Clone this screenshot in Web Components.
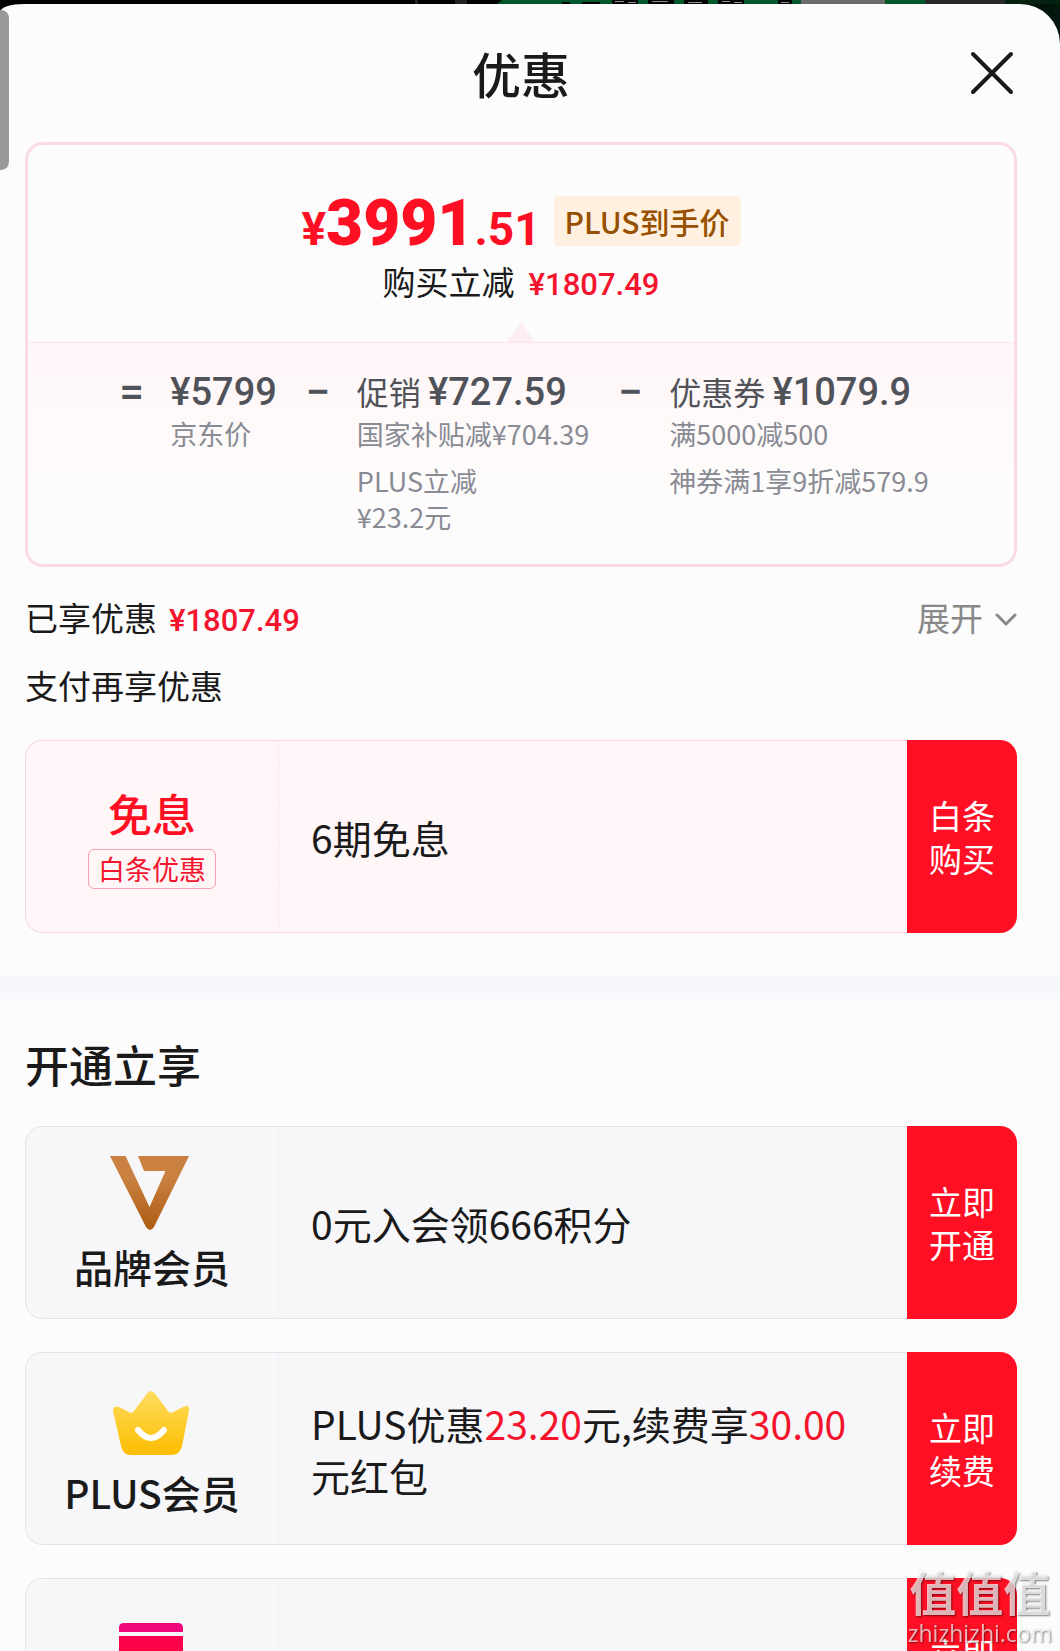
<!DOCTYPE html>
<html lang="zh-CN">
<head>
<meta charset="utf-8">
<meta name="viewport" content="width=device-width, initial-scale=1">
<title>优惠</title>
<style>
  html, body {
    height: 100%;
    margin: 0;
  }
  body {
    overflow: hidden;
    background: #000;
    color: #1a1a1a;
    font-family: "Noto Sans CJK SC", sans-serif;
    --red: #ff0f23;
    --num: Roboto, "Noto Sans CJK SC", sans-serif;
  }
  em {
    font-style: normal;
    color: #f5142d;
  }
</style>
</head>
<body>
<discount-sheet>
  <span slot="title">优惠</span>

  <price-card symbol="¥" whole="3991" cents=".51" tag="PLUS到手价" label="购买立减" saved="¥1807.49">
    <price-term sign="=" amount="¥5799">
      <div>京东价</div>
    </price-term>
    <price-term sign="−" label="促销" amount="¥727.59">
      <div>国家补贴减¥704.39</div>
      <div>PLUS立减<br>¥23.2元</div>
    </price-term>
    <price-term sign="−" label="优惠券" amount="¥1079.9">
      <div>满5000减500</div>
      <div>神券满1享9折减579.9</div>
    </price-term>
  </price-card>

  <saved-summary label="已享优惠" amount="¥1807.49" more="展开" next="支付再享优惠"></saved-summary>

  <offer-row tone="pink">
    <offer-badge slot="brand" heading="免息" note="白条优惠"></offer-badge>
    6期免息
    <span slot="action">白条<br>购买</span>
  </offer-row>

  <section-break heading="开通立享"></section-break>

  <offer-row>
    <member-brand slot="brand" icon="brand">品牌会员</member-brand>
    0元入会领666积分
    <span slot="action">立即<br>开通</span>
  </offer-row>
  <offer-row>
    <member-brand slot="brand" icon="plus">PLUS会员</member-brand>
    PLUS优惠<em>23.20</em>元,续费享<em>30.00</em>元红包
    <span slot="action">立即<br>续费</span>
  </offer-row>
  <offer-row>
    <member-brand slot="brand" icon="card"></member-brand>
    <span slot="action">立即<br>开通</span>
  </offer-row>
</discount-sheet>
<site-mark name="值值值" site="zhizhizhi.com"></site-mark>

<script>
class DiscountSheet extends HTMLElement {
  constructor() {
    super();
    this.attachShadow({mode: 'open'});
  }

  connectedCallback() {
    this.shadowRoot.innerHTML = `
      <style>
        :host {
          display: flex;
          flex-direction: column;
          height: 100%;
          position: relative;
          background: linear-gradient(90deg, #000 90%, #03180d);
        }
        .behind {
          display: block;
          flex: none;
          width: 100%;
          height: 4px;
        }
        .sheet {
          flex: 1;
          min-height: 0;
          overflow: hidden;
          background: #fcfcfc;
          border-radius: 24px 40px 0 0 / 8px 40px 0 0;
        }
        header {
          display: grid;
          grid-template-columns: 48px 1fr 48px;
          align-items: center;
          height: 138px;
          padding: 0 43px 0 25px;
        }
        h1 {
          grid-column: 2;
          margin: 0;
          text-align: center;
          font-size: 49px;
          font-weight: 500;
          line-height: 70px;
        }
        button {
          width: 48px;
          height: 48px;
          padding: 0;
          border: 0;
          background: none;
        }
        button svg {
          display: block;
        }
        main {
          display: flex;
          flex-direction: column;
        }
        .bar {
          position: absolute;
          left: 0;
          top: 10px;
          width: 9px;
          height: 160px;
          border-radius: 0 8px 8px 0;
          background: #999;
        }
      </style>
      <svg class="behind" viewBox="0 0 1060 4" preserveAspectRatio="none" aria-hidden="true">
        <path fill="#222" d="M415 0h3v4h-3zM455 0h12v4h-12z"/>
        <path fill="#00582b" d="M502 0H925V4H497z"/>
        <path fill="#050505" d="M562 2h8v2h-8zM582 2h18v2h-18zM612 0h26v4h-26zM648 0h26v4h-26zM684 0h24v4h-24zM718 0h26v4h-26zM778 0h14v4h-14z"/>
        <path fill="#8f8f8f" d="M615 1h9v1h-9zM628 2h8v1h-8zM652 1h16v1h-16zM688 2h14v1h-14zM722 1h8v1h-8zM734 2h8v1h-8zM781 2h8v1h-8z"/>
        <path fill="#6b6b6b" d="M801 0h84v4h-84z"/>
        <path fill="#262b28" d="M925 0h80v4h-80z"/>
        <path fill="#052112" d="M1005 0h55v4h-55z"/>
      </svg>
      <div class="sheet">
        <header>
          <h1><slot name="title"></slot></h1>
          <button aria-label="关闭">
            <svg width="48" height="48" viewBox="0 0 48 48" fill="none" stroke="#1a1a1a" stroke-width="4" stroke-linecap="round">
              <path d="M4 5L42 43M42 5L4 43"/>
            </svg>
          </button>
        </header>
        <main><slot></slot></main>
      </div>
      <div class="bar"></div>
    `;
  }
}

class PriceCard extends HTMLElement {
  constructor() {
    super();
    this.attachShadow({mode: 'open'});
  }

  connectedCallback() {
    const at = name => this.getAttribute(name);
    this.shadowRoot.innerHTML = `
      <style>
        :host {
          display: block;
          margin: 0 43px 0 25px;
          border: 3px solid #fadbe4;
          border-radius: 18px;
        }
        .top {
          display: flex;
          flex-direction: column;
          align-items: center;
          padding-top: 51px;
        }
        .price {
          display: flex;
          align-items: flex-start;
          gap: 13px;
          height: 50px;
        }
        .num {
          color: var(--red);
          font: 700 46px/56px var(--num);
        }
        .num b {
          font-size: 64px;
        }
        .tag {
          padding: 0 11px;
          border-radius: 4px;
          background: #fff0df;
          color: #965000;
          font-size: 30px;
          font-weight: 500;
          line-height: 50px;
        }
        .sub {
          display: flex;
          align-items: baseline;
          gap: 14px;
          height: 48px;
          font-size: 33px;
          line-height: 46px;
          margin-top: 12px;
        }
        .sub b {
          color: #f5142d;
          font: 500 31px/46px var(--num);
        }
        .caret {
          display: block;
          margin-top: 16px;
        }
        .terms {
          display: flex;
          justify-content: center;
          gap: 29px;
          padding: 25px 0 29px 6px;
          border-top: 1px solid #fde8ec;
          border-radius: 0 0 15px 15px;
          background: linear-gradient(#fff6f7, #fefbfb 60%, #fcfcfc);
        }
      </style>
      <div class="top">
        <div class="price">
          <span class="num">${at('symbol')}<b>${at('whole')}</b>${at('cents')}</span>
          <span class="tag">${at('tag')}</span>
        </div>
        <div class="sub"><span>${at('label')}</span><b>${at('saved')}</b></div>
        <svg class="caret" width="28" height="20" viewBox="0 0 28 20" fill="#fdeef1" aria-hidden="true">
          <path d="M14 0L28 20H0z"/>
        </svg>
      </div>
      <div class="terms"><slot></slot></div>
    `;
  }
}

class PriceTerm extends HTMLElement {
  constructor() {
    super();
    this.attachShadow({mode: 'open'});
  }

  connectedCallback() {
    const label = this.getAttribute('label') || '';
    this.shadowRoot.innerHTML = `
      <style>
        :host {
          display: flex;
          gap: 29px;
          color: #505259;
        }
        .sign {
          width: 22px;
          text-align: center;
          font: 500 44px/48px var(--num);
        }
        .head {
          height: 48px;
          font-size: 32px;
          line-height: 46px;
          white-space: nowrap;
        }
        .head b {
          font: 500 38px/46px var(--num);
        }
        .notes {
          display: flex;
          flex-direction: column;
          gap: 11px;
          color: #888b94;
          font-size: 27px;
          line-height: 36px;
        }
      </style>
      <span class="sign">${this.getAttribute('sign')}</span>
      <div>
        <div class="head">${label} <b>${this.getAttribute('amount')}</b></div>
        <div class="notes"><slot></slot></div>
      </div>
    `;
  }
}

class SavedSummary extends HTMLElement {
  constructor() {
    super();
    this.attachShadow({mode: 'open'});
  }

  connectedCallback() {
    const at = name => this.getAttribute(name);
    this.shadowRoot.innerHTML = `
      <style>
        :host {
          display: flex;
          flex-direction: column;
          gap: 19px;
          padding: 27px 43px 31px 25px;
          font-size: 33px;
          line-height: 48px;
        }
        .row {
          display: flex;
          align-items: baseline;
          gap: 12px;
          height: 48px;
          line-height: 46px;
        }
        b {
          color: #f5142d;
          font: 500 31px/46px var(--num);
        }
        button {
          display: flex;
          align-items: center;
          gap: 12px;
          margin-left: auto;
          padding: 0;
          border: 0;
          background: none;
          color: #888;
          font: inherit;
        }
      </style>
      <div class="row">
        <span>${at('label')}</span><b>${at('amount')}</b>
        <button>${at('more')}
          <svg width="22" height="20" viewBox="0 0 22 20" fill="none" stroke="#888" stroke-width="3" stroke-linecap="round" aria-hidden="true">
            <path d="M2 8L11 17L20 8"/>
          </svg>
        </button>
      </div>
      <div>${at('next')}</div>
    `;
  }
}

class OfferRow extends HTMLElement {
  constructor() {
    super();
    this.attachShadow({mode: 'open'});
  }

  connectedCallback() {
    this.shadowRoot.innerHTML = `
      <style>
        :host {
          --line: #e3e4e8;
          display: grid;
          grid-template-columns: 253px 1fr 110px;
          min-height: 193px;
          margin: 0 43px 33px 25px;
          border-radius: 17px;
          background: #f7f7fa;
          overflow: hidden;
        }
        :host([tone="pink"]) {
          --line: #f8d5dc;
          background: #fff6f7;
          margin-bottom: 43px;
        }
        .brand, .text {
          border: 1px solid var(--line);
          border-right: 0;
        }
        .brand {
          display: grid;
          border-radius: 17px 0 0 17px;
        }
        .text {
          display: flex;
          align-items: center;
          border-left: 1px dashed #ececf0;
          padding: 0 32px;
          font-size: 39px;
          line-height: 52px;
        }
        :host([tone="pink"]) .text {
          border-left-color: #fbe3e7;
        }
        button {
          border: 0;
          padding: 0;
          background: var(--red);
          color: #fff;
          font-family: inherit;
          font-size: 33px;
          line-height: 43px;
        }
      </style>
      <div class="brand"><slot name="brand"></slot></div>
      <div class="text"><div><slot></slot></div></div>
      <button><slot name="action"></slot></button>
    `;
  }
}

class OfferBadge extends HTMLElement {
  constructor() {
    super();
    this.attachShadow({mode: 'open'});
  }

  connectedCallback() {
    this.shadowRoot.innerHTML = `
      <style>
        :host {
          display: flex;
          flex-direction: column;
          align-items: center;
          justify-content: center;
          gap: 8px;
        }
        b {
          color: var(--red);
          font-size: 44px;
          font-weight: 500;
          line-height: 56px;
        }
        span {
          padding: 0 9px;
          border: 1px solid #f7a3b0;
          border-radius: 6px;
          color: #f5142d;
          font-size: 27px;
          line-height: 38px;
        }
      </style>
      <b>${this.getAttribute('heading')}</b>
      <span>${this.getAttribute('note')}</span>
    `;
  }
}

const ICONS = {
  brand: `
    <linearGradient id="g" x2="0" y2="1">
      <stop offset=".3" stop-color="#c98040"/><stop offset="1" stop-color="#ae5b12"/>
    </linearGradient>
    <path fill="url(#g)" d="M2 6H17.5L41.5 57L57.5 21H36L30 6H81L46 77Q42 83 38 77z"/>`,
  plus: `
    <linearGradient id="g" x2="0" y2="1">
      <stop offset="0" stop-color="#ffdc60"/><stop offset="1" stop-color="#fdbd00"/>
    </linearGradient>
    <path fill="url(#g)" d="M39.5 17Q43 13 46.5 17L60 35Q62 38 65 36L75 31Q82 28 81 35L74 70Q72 79 63 79H23Q15 79 13 70L5 35Q5 29 11 31L21 36Q24 38 26 35z"/>
    <path fill="none" stroke="#fff" stroke-width="6" stroke-linecap="round" d="M30 54Q43 70 56 54"/>`,
  card: `
    <linearGradient id="g" x2="0" y2="1">
      <stop offset="0" stop-color="#fa0050"/><stop offset="1" stop-color="#ff1030"/>
    </linearGradient>
    <path fill="#f0067c" d="M11 30V26Q11 21 16 21H70Q75 21 75 26V30z"/>
    <path fill="url(#g)" d="M11 34H75V74Q75 79 70 79H16Q11 79 11 74z"/>`
};

class MemberBrand extends HTMLElement {
  constructor() {
    super();
    this.attachShadow({mode: 'open'});
  }

  connectedCallback() {
    this.shadowRoot.innerHTML = `
      <style>
        :host {
          display: flex;
          flex-direction: column;
          align-items: center;
          gap: 2px;
          padding-top: 23px;
          font-size: 39px;
          font-weight: 500;
          line-height: 52px;
        }
        svg {
          display: block;
        }
      </style>
      <svg width="88" height="88" viewBox="0 0 88 88" aria-hidden="true">${ICONS[this.getAttribute('icon')]}</svg>
      <span><slot></slot></span>
    `;
  }
}

class SectionBreak extends HTMLElement {
  constructor() {
    super();
    this.attachShadow({mode: 'open'});
  }

  connectedCallback() {
    this.shadowRoot.innerHTML = `
      <style>
        :host {
          display: block;
          border-top: 23px solid #f7f8fc;
        }
        h2 {
          margin: 0;
          padding: 35px 43px 32px 25px;
          font-size: 44px;
          font-weight: 500;
          line-height: 60px;
        }
      </style>
      <h2>${this.getAttribute('heading')}</h2>
    `;
  }
}

// sits over the bottom right corner of the page
class SiteMark extends HTMLElement {
  constructor() {
    super();
    this.attachShadow({mode: 'open'});
  }

  connectedCallback() {
    this.shadowRoot.innerHTML = `
      <style>
        :host {
          position: fixed;
          right: 8px;
          bottom: 4px;
          display: flex;
          flex-direction: column;
          align-items: center;
          gap: 4px;
          color: rgba(255, 255, 255, .7);
          text-shadow: 1px 1px 2px rgba(0, 0, 0, .5);
          pointer-events: none;
        }
        b {
          font-size: 47px;
          font-weight: 700;
          line-height: 48px;
        }
        span {
          font: 23px/28px "Open Sans", sans-serif;
        }
      </style>
      <b>${this.getAttribute('name')}</b>
      <span>${this.getAttribute('site')}</span>
    `;
  }
}

customElements.define('discount-sheet', DiscountSheet);
customElements.define('price-card', PriceCard);
customElements.define('price-term', PriceTerm);
customElements.define('saved-summary', SavedSummary);
customElements.define('offer-row', OfferRow);
customElements.define('offer-badge', OfferBadge);
customElements.define('member-brand', MemberBrand);
customElements.define('section-break', SectionBreak);
customElements.define('site-mark', SiteMark);
</script>
</body>
</html>
